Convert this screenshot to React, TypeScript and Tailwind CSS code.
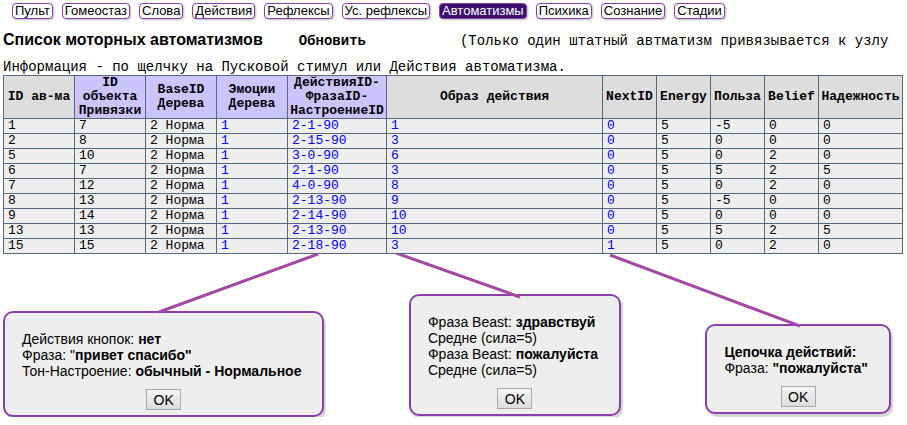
import type { ReactNode } from "react";

const tabs = [
  "Пульт",
  "Гомеостаз",
  "Слова",
  "Действия",
  "Рефлексы",
  "Ус. рефлексы",
  "Автоматизмы",
  "Психика",
  "Сознание",
  "Стадии",
];
const activeTab = "Автоматизмы";

type Column = { title: string; width: number; keyed?: boolean; linked?: boolean };

// Widths are relative shares of the whole table.
const columns: Column[] = [
  { title: "ID ав-ма", width: 71 },
  { title: "ID объекта Привязки", width: 71, keyed: true },
  { title: "BaseID Дерева", width: 71, keyed: true },
  { title: "Эмоции Дерева", width: 71, keyed: true, linked: true },
  { title: "ДействияID-\nФразаID-\nНастроениеID", width: 99, keyed: true, linked: true },
  { title: "Образ действия", width: 216, linked: true },
  { title: "NextID", width: 54, linked: true },
  { title: "Energy", width: 54 },
  { title: "Польза", width: 54 },
  { title: "Belief", width: 54 },
  { title: "Надежность", width: 84 },
];
const totalWidth = columns.reduce((sum, c) => sum + c.width, 0);

const rows = [
  ["1", "7", "2 Норма", "1", "2-1-90", "1", "0", "5", "-5", "0", "0"],
  ["2", "8", "2 Норма", "1", "2-15-90", "3", "0", "5", "0", "0", "0"],
  ["5", "10", "2 Норма", "1", "3-0-90", "6", "0", "5", "0", "2", "0"],
  ["6", "7", "2 Норма", "1", "2-1-90", "3", "0", "5", "5", "2", "5"],
  ["7", "12", "2 Норма", "1", "4-0-90", "8", "0", "5", "0", "2", "0"],
  ["8", "13", "2 Норма", "1", "2-13-90", "9", "0", "5", "-5", "0", "0"],
  ["9", "14", "2 Норма", "1", "2-14-90", "10", "0", "5", "0", "0", "0"],
  ["13", "13", "2 Норма", "1", "2-13-90", "10", "0", "5", "5", "2", "5"],
  ["15", "15", "2 Норма", "1", "2-18-90", "3", "1", "5", "0", "2", "0"],
];

function Nav() {
  return (
    <nav className="flex flex-wrap gap-[9px] pl-3 pt-[3px]">
      {tabs.map((tab) => (
        <a
          key={tab}
          href="#"
          aria-current={tab === activeTab ? "page" : undefined}
          className={
            tab === activeTab
              ? "rounded-[4px] border border-[#8b3fa8] bg-[#3b0f6b] px-[2px] text-[13px] leading-[14px] text-white shadow-[1px_1px_2px_#bbbbbb]"
              : "rounded-[4px] border border-[#8b3fa8] bg-white px-[2px] text-[13px] leading-[14px] text-black shadow-[1px_1px_2px_#bbbbbb]"
          }
        >
          {tab}
        </a>
      ))}
    </nav>
  );
}

function AutomatismTable() {
  return (
    <table className="w-full table-fixed border-collapse font-['Liberation_Mono',monospace] text-[13px] leading-[14px]">
      <colgroup>
        {columns.map((c) => (
          <col key={c.title} style={{ width: `${(c.width / totalWidth) * 100}%` }} />
        ))}
      </colgroup>
      <thead>
        <tr>
          {columns.map((c) => (
            <th
              key={c.title}
              scope="col"
              className={
                c.keyed
                  ? "whitespace-pre-line border border-[#56687d] bg-[#ccc4ff] p-0 text-center align-middle font-bold"
                  : "whitespace-pre-line border border-[#56687d] bg-[#dddddd] p-0 text-center align-middle font-bold"
              }
            >
              {c.title}
            </th>
          ))}
        </tr>
      </thead>
      <tbody>
        {rows.map((row) => (
          <tr key={row[0]}>
            {row.map((value, i) => (
              <td key={columns[i].title} className="border border-[#56687d] bg-[#eeeeee] py-0 pl-1 pr-0">
                {columns[i].linked ? (
                  <a href="#" className="text-[#0000ff]">
                    {value}
                  </a>
                ) : (
                  value
                )}
              </td>
            ))}
          </tr>
        ))}
      </tbody>
    </table>
  );
}

function Popup({ className, children }: { className: string; children: ReactNode }) {
  return (
    <div className={className}>
      <div
        role="dialog"
        className="flex flex-col items-center rounded-[10px] border-2 border-[#8b3fa8] bg-[#eeeeee] px-[17px] pb-[5px] pt-[18px] text-[14px] leading-4 shadow-[2px_3px_1px_#d4d4d4]"
      >
        <div className="whitespace-nowrap pr-1">{children}</div>
        <button
          type="button"
          className="mt-[10px] h-[21px] w-[35px] border border-[#a9a9a9] bg-gradient-to-b from-[#f4f4f4] to-[#dddddd] text-[14px] leading-4"
        >
          OK
        </button>
      </div>
    </div>
  );
}

function Popups() {
  return (
    <section className="relative flex items-start justify-between pl-[3px] pr-4">
      <Popup className="pt-[57px]">
        <p>
          Действия кнопок: <b>нет</b>
        </p>
        <p>
          Фраза: "<b>привет спасибо"</b>
        </p>
        <p>
          Тон-Настроение: <b>обычный - Нормальное</b>
        </p>
      </Popup>
      <Popup className="pt-10">
        <p>
          Фраза Beast: <b>здравствуй</b>
        </p>
        <p>Средне (сила=5)</p>
        <p>
          Фраза Beast: <b>пожалуйста</b>
        </p>
        <p>Средне (сила=5)</p>
      </Popup>
      <Popup className="pt-[70px]">
        <p>
          <b>Цепочка действий:</b>
        </p>
        <p>
          Фраза: <b>"пожалуйста"</b>
        </p>
      </Popup>
      <svg
        aria-hidden="true"
        viewBox="0 0 907 76"
        preserveAspectRatio="none"
        className="pointer-events-none absolute inset-x-0 top-0 h-[76px] w-full"
        stroke="#a349a4"
        strokeWidth="3"
      >
        <line x1="318" y1="0" x2="159" y2="58" />
        <line x1="396" y1="-1" x2="520" y2="43" />
        <line x1="610" y1="1" x2="800" y2="72" />
      </svg>
    </section>
  );
}

export default function App() {
  return (
    <main className="bg-white font-['Liberation_Sans',Arial,sans-serif] text-black">
      <Nav />
      <header className="pl-[3px] pt-2 font-['Liberation_Mono',monospace] text-[14px]">
        <div className="flex items-baseline leading-[26px]">
          <h1 className="whitespace-nowrap font-['Liberation_Sans',Arial,sans-serif] text-[16px] font-bold">
            Список моторных автоматизмов
          </h1>
          <button type="button" className="ml-9 font-bold">
            Обновить
          </button>
          <p className="ml-[94px] whitespace-nowrap">(Только один штатный автматизм привязывается к узлу</p>
        </div>
        <p className="pt-[5px] leading-4">
          Информация - по щелчку на Пусковой стимул или Действия автоматизма.
        </p>
      </header>
      <div className="pl-[3px] pr-1">
        <AutomatismTable />
      </div>
      <Popups />
    </main>
  );
}
